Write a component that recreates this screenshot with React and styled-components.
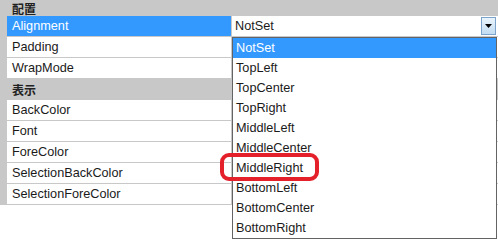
import styled, { createGlobalStyle } from "styled-components"

const Global = createGlobalStyle`
    html, body { margin:0; padding:0; background:#fff; }
    body { width:498px; height:241px; overflow:hidden; }
`

const Grid = styled.div`
    position:relative;
    width:498px;
    height:241px;
    display:flex;
    flex-direction:column;
    font-family:"Liberation Sans", "Noto Sans CJK JP", sans-serif;
    font-size:12.7px;
    color:#1a1a1a;
`
const Category = styled.div`
    height:${p => p.$h}px;
    flex:none;
    box-sizing:border-box;
    background:#c8c8c8;
    display:flex;
    align-items:center;
    padding-left:12px;
    font-family:"Noto Sans CJK JP", sans-serif;
    font-weight:bold;
    font-size:12px;
    color:#222;
`
const Row = styled.div`
    height:21px;
    flex:none;
    display:grid;
    grid-template-columns:7px 225px 1fr;
`
const Gutter = styled.div`
    background:#c8c8c8;
`
const NameCell = styled.div`
    box-sizing:border-box;
    border-bottom:1px solid #c8c8c8;
    border-right:1px solid #c8c8c8;
    background:${p => p.$selected ? "#3399ff" : "#fff"};
    color:${p => p.$selected ? "#fff" : "#1a1a1a"};
    display:flex;
    align-items:center;
    padding-left:5px;
`
const ValueCell = styled.div`
    box-sizing:border-box;
    border-bottom:1px solid #c8c8c8;
    background:#fff;
    display:flex;
    align-items:center;
    padding-left:3px;
    padding-right:2px;
`
const ValueText = styled.span`
    flex:1;
`
const DropButton = styled.div`
    width:15px;
    height:18px;
    box-sizing:border-box;
    border:1px solid #7ba3cc;
    background:linear-gradient(#eaf4fc, #c2dcf2);
    display:flex;
    align-items:center;
    justify-content:center;
`
const List = styled.div`
    position:absolute;
    left:232px;
    top:37px;
    width:265px;
    box-sizing:border-box;
    border:1px solid #646464;
    background:#fff;
    display:flex;
    flex-direction:column;
`
const Item = styled.div`
    height:20px;
    display:flex;
    align-items:center;
    padding-left:3px;
    background:${p => p.$active ? "#3399ff" : "#fff"};
    color:${p => p.$active ? "#fff" : "#1a1a1a"};
`
const Mark = styled.div`
    position:absolute;
    left:220px;
    top:153px;
    width:99px;
    height:28px;
    box-sizing:border-box;
    border:4px solid #e4202a;
    border-radius:9px;
`

const props1 = ["Alignment", "Padding", "WrapMode"]
const props2 = ["BackColor", "Font", "ForeColor", "SelectionBackColor", "SelectionForeColor"]
const options = ["NotSet", "TopLeft", "TopCenter", "TopRight", "MiddleLeft", "MiddleCenter", "MiddleRight", "BottomLeft", "BottomCenter", "BottomRight"]

export default function App() {
    return (
        <Grid>
            <Global />
            <Category $h={16}>配置</Category>
            {props1.map((name, i) => (
                <Row key={name}>
                    <Gutter />
                    <NameCell $selected={i === 0}>{name}</NameCell>
                    <ValueCell>
                        {i === 0 && <>
                            <ValueText>NotSet</ValueText>
                            <DropButton>
                                <svg width="7" height="4" viewBox="0 0 7 4"><path d="M0 0h7L3.5 4z" fill="#000" /></svg>
                            </DropButton>
                        </>}
                    </ValueCell>
                </Row>
            ))}
            <Category $h={21}>表示</Category>
            {props2.map(name => (
                <Row key={name}>
                    <Gutter />
                    <NameCell>{name}</NameCell>
                    <ValueCell />
                </Row>
            ))}
            <List>
                {options.map((o, i) => (
                    <Item key={o} $active={i === 0}>{o}</Item>
                ))}
            </List>
            <Mark />
        </Grid>
    )
}
